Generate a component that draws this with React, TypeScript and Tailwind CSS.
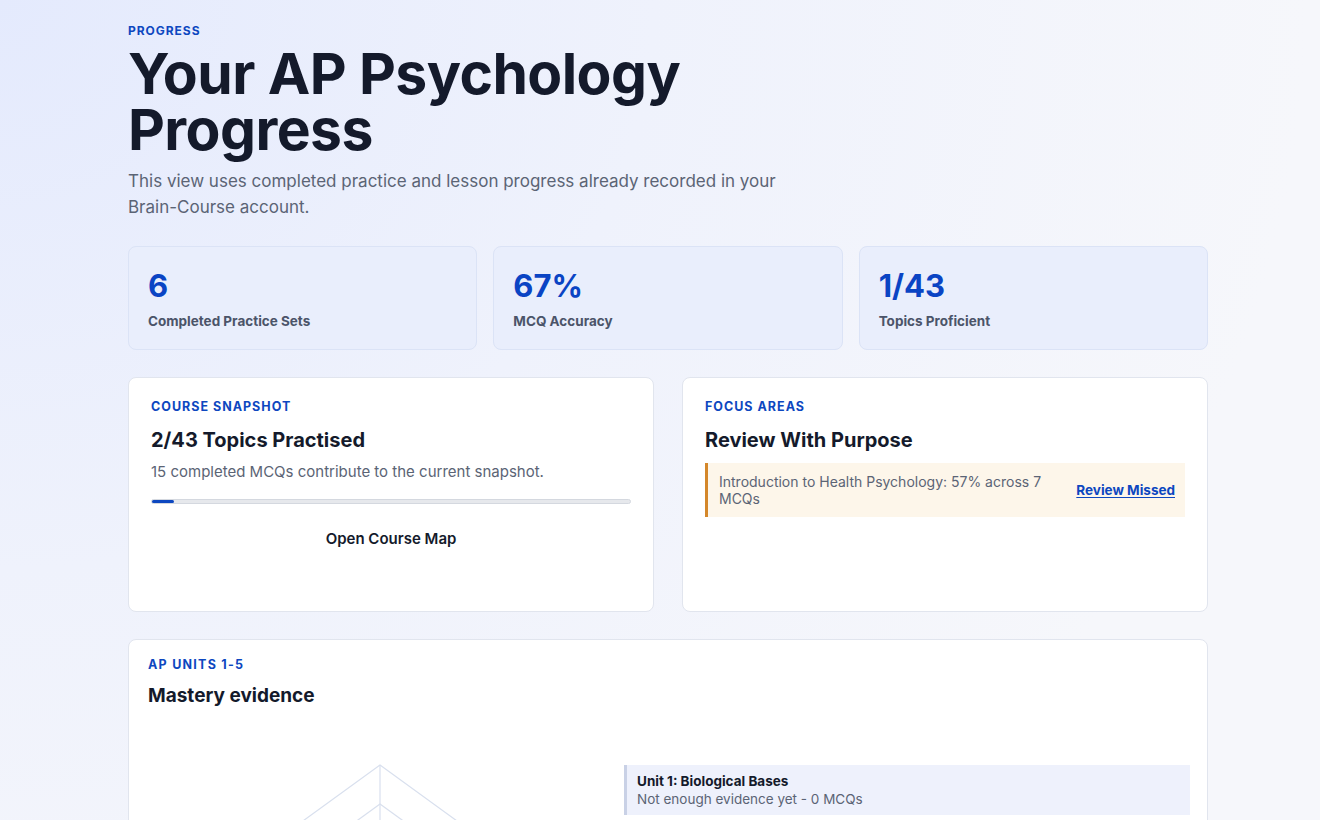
import React from "react";

const stats = [
  { value: "6", label: "Completed Practice Sets" },
  { value: "67%", label: "MCQ Accuracy" },
  { value: "1/43", label: "Topics Proficient" },
];

const units = [
  "Unit 1: Biological Bases",
  "Unit 2: Cognition",
  "Unit 3: Development and Learning",
  "Unit 4: Social Psychology and Personality",
  "Unit 5: Mental and Physical Health",
];

function Radar() {
  const cx = 232;
  const cy = 195;
  const R = 156;
  const pt = (i: number, r: number): [number, number] => {
    const a = (-90 + i * 72) * (Math.PI / 180);
    return [cx + r * Math.cos(a), cy + r * Math.sin(a)];
  };
  const rings = [1, 0.75, 0.5, 0.25];
  return (
    <svg width="464" height="360" viewBox="0 0 464 360">
      {rings.map((s) => (
        <polygon
          key={s}
          points={[0, 1, 2, 3, 4].map((i) => pt(i, R * s).join(",")).join(" ")}
          fill="none"
          stroke="#d9e0ee"
          strokeWidth="1.2"
        />
      ))}
      {[0, 1, 2, 3, 4].map((i) => {
        const [x, y] = pt(i, R);
        return <line key={i} x1={cx} y1={cy} x2={x} y2={y} stroke="#d9e0ee" strokeWidth="1.2" />;
      })}
    </svg>
  );
}

export default function App() {
  return (
    <div className="min-h-screen bg-[#f6f7fb] bg-[radial-gradient(ellipse_at_top_left,#e4eafd_0%,#eff2fc_35%,#f6f7fb_70%)] font-['Inter','Noto_Sans',sans-serif] text-[#141a2b]">
      <div className="ml-[128px] w-[1080px] pt-[24px] pb-10">
        {/* Header */}
        <p className="text-[12px] font-bold tracking-[0.08em] text-[#0d47c0] leading-[14px]">
          PROGRESS
        </p>
        <h1 className="mt-[8px] text-[57px] font-bold leading-[56px] tracking-[-0.01em] text-[#141a2b]">
          Your AP Psychology
          <br />
          Progress
        </h1>
        <p className="mt-[10px] max-w-[670px] text-[17px] leading-[26px] text-[#5b6475]">
          This view uses completed practice and lesson progress already recorded in your
          Brain-Course account.
        </p>

        {/* Stats */}
        <div className="mt-[26px] grid grid-cols-3 gap-4">
          {stats.map((s) => (
            <div
              key={s.label}
              className="h-[104px] rounded-lg border border-[#dbe3f6] bg-[#e9eefc] px-[19px] pt-[22px]"
            >
              <div className="text-[31px] font-bold leading-[34px] text-[#0a44c4]">{s.value}</div>
              <div className="mt-[8px] text-[13.5px] font-bold text-[#4b5469]">{s.label}</div>
            </div>
          ))}
        </div>

        {/* Snapshot + focus */}
        <div className="mt-[27px] grid grid-cols-2 gap-[28px]">
          <div className="h-[235px] rounded-lg border border-[#e1e5ee] bg-white px-[22px] pt-[20px]">
            <p className="text-[12.5px] font-bold tracking-[0.08em] text-[#0d47c0]">COURSE SNAPSHOT</p>
            <h2 className="mt-[10px] text-[20px] font-bold leading-[26px]">2/43 Topics Practised</h2>
            <p className="mt-[8px] text-[15px] leading-[22px] text-[#5b6475]">
              15 completed MCQs contribute to the current snapshot.
            </p>
            <div className="mt-[16px] h-[5px] w-full rounded-full border border-[#d4d8df] bg-[#e6e8ec]">
              <div className="h-full w-[4.65%] rounded-full bg-[#0d47c0]" />
            </div>
            <div className="mt-[24px] text-center text-[15px] font-semibold text-[#141a2b]">
              Open Course Map
            </div>
          </div>

          <div className="h-[235px] rounded-lg border border-[#e1e5ee] bg-white px-[22px] pt-[20px]">
            <p className="text-[12.5px] font-bold tracking-[0.08em] text-[#0d47c0]">FOCUS AREAS</p>
            <h2 className="mt-[10px] text-[20px] font-bold leading-[26px]">Review With Purpose</h2>
            <div className="mt-[10px] flex h-[54px] items-center justify-between border-l-[3px] border-[#d4872a] bg-[#fdf6ea] pl-[11px] pr-[10px]">
              <p className="w-[330px] text-[14px] leading-[17px] text-[#5b6475]">
                Introduction to Health Psychology: 57% across 7 MCQs
              </p>
              <a className="text-[13.5px] font-bold text-[#0d47c0] underline underline-offset-2" href="#">
                Review Missed
              </a>
            </div>
          </div>
        </div>

        {/* Mastery */}
        <div className="mt-[27px] rounded-lg border border-[#e1e5ee] bg-white px-[19px] pt-[16px] pb-6">
          <p className="text-[12.5px] font-bold tracking-[0.1em] text-[#0d47c0]">AP UNITS 1-5</p>
          <h2 className="mt-[8px] text-[19px] font-bold leading-[26px]">Mastery evidence</h2>
          <div className="mt-[17px] grid grid-cols-[464px_566px] items-center gap-[12px]">
            <Radar />
            <div className="flex flex-col gap-2">
              {units.map((u) => (
                <div
                  key={u}
                  className="h-[50px] border-l-[3px] border-[#c9d1e6] bg-[#eef1fc] pl-[10px] pt-[8px]"
                >
                  <div className="text-[13.5px] font-bold leading-[17px] text-[#141a2b]">{u}</div>
                  <div className="text-[13.5px] leading-[18px] text-[#5b6475]">
                    Not enough evidence yet - 0 MCQs
                  </div>
                </div>
              ))}
            </div>
          </div>
        </div>
      </div>
    </div>
  );
}
